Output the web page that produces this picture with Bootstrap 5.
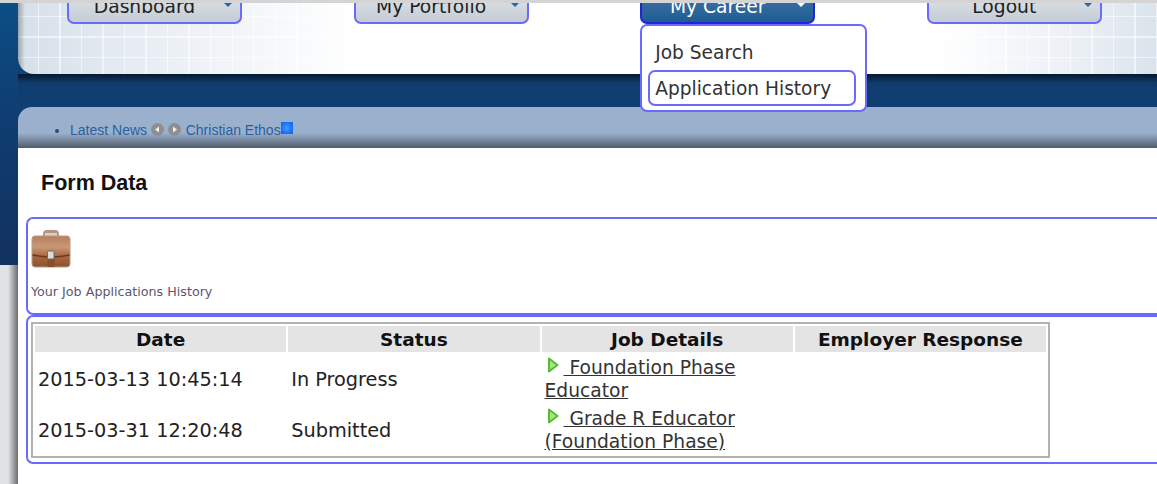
<!DOCTYPE html>
<html lang="en">
<head>
    <meta charset="UTF-8">
    <meta name="viewport" content="width=device-width, initial-scale=1.0">
    <title>Application History</title>
    <link href="https://cdn.jsdelivr.net/npm/bootstrap@5.3.3/dist/css/bootstrap.min.css" rel="stylesheet">
    <script src="https://cdn.jsdelivr.net/npm/bootstrap@5.3.3/dist/js/bootstrap.bundle.min.js"></script>
    <style>
        html, body { height: 100%; }
        body {
            margin: 0;
            overflow: hidden;
            font-family: "DejaVu Sans", sans-serif;
            background-color: #dfe3e6;
            background-image:
                linear-gradient(to right, rgba(70,70,70,0) 8px, #6b6b6b 18px),
                linear-gradient(to bottom, #0b4f86 0, #0f3f74 100px, #12315f 265px, #12315f 265px);
            background-size: 100% 219px, 100% 265px;
            background-position: 0 265px, 0 0;
            background-repeat: no-repeat;
        }
        .chrome-line { height: 3px; background: #d4d4d4; position: relative; z-index: 5; }
        .page-shell { padding-left: 18px; }
        .head-panel {
            height: 71px;
            padding-left: 49px;
            border-bottom-left-radius: 16px;
            background-color: #d6e0ea;
            background-image:
                linear-gradient(to right, rgba(90,90,90,.45) 0, rgba(255,255,255,0) 7px),
                linear-gradient(to right, rgba(255,255,255,0) 0, rgba(255,255,255,.6) 180px, #fff 340px, #fff 920px, rgba(255,255,255,.55) 1050px, rgba(255,255,255,.1) 1139px),
                repeating-linear-gradient(to right, transparent 0 20px, rgba(255,255,255,.55) 20px 21.5px),
                repeating-linear-gradient(to bottom, transparent 0 13px, rgba(255,255,255,.55) 13px 14.5px, transparent 14.5px 20.5px);
        }
        .menu-group { width: 175px; margin-right: 111.6px; margin-top: -15px; }
        .menu-btn {
            width: 175px;
            height: 36px;
            padding: 4px 7px 0 0;
            display: flex;
            align-items: center;
            font-size: 18.7px;
            color: #222;
            border: 2px solid #6a6aff;
            border-top: 0;
            border-radius: 0 0 7px 7px;
            background: linear-gradient(to bottom, #e4e8ec, #c4ccd4);
        }
        .menu-btn.is-open {
            color: #fff;
            border-color: #2323d8;
            background: linear-gradient(to bottom, #4478a8, #1f5c94);
        }
        .menu-btn span.label { flex-grow: 1; text-align: center; margin-right: 3px; }
        .caret-mark {
            width: 0; height: 0;
            margin-top: -6px;
            border-left: 5px solid transparent;
            border-right: 5px solid transparent;
            border-top: 5px solid #1f6aa8;
        }
        .is-open .caret-mark { border-top-color: #fff; }
        .career-menu.dropdown-menu {
            top: 36px;
            left: 0;
            width: 227px;
            height: 88px;
            padding: 8px 6px 0;
            margin: 0;
            min-width: 0;
            border: 2px solid #6a6aff;
            border-radius: 7px;
            background: #fff;
            z-index: 6;
        }
        .career-menu .dropdown-item {
            padding: 0 5px;
            font-size: 18.6px;
            color: #333;
            height: 36px;
            line-height: 34px;
            border: 2px solid transparent;
            border-radius: 7px;
            background: none;
        }
        .career-menu .dropdown-item.is-current { border-color: #6a6aff; width: 208px; }
        .head-gap {
            height: 33px;
            background: linear-gradient(to bottom, #06182e 0, #0f3c6e 9px, #0f3f72 100%);
        }
        .news-bar {
            height: 41px;
            padding-top: 15px;
            border-top-left-radius: 14px;
            background: linear-gradient(to bottom, #9bb0cd 0, #9bb0cd 26px, #4f5c6c 100%);
            font-family: "Liberation Sans", Arial, sans-serif;
            font-size: 14px;
            color: #29619f;
        }
        .news-list { margin: 0; padding: 0 0 0 52px; color: #1d4f8c; }
        .news-list li { line-height: 16px; }
        .news-list svg { vertical-align: -1px; }
        .ticker-text { color: #29619f; }
        .ticker-gap { margin-left: 1px; }
        .blue-dot {
            display: inline-block;
            width: 12px; height: 12px;
            vertical-align: 1px;
            background: radial-gradient(circle, #4d9bff 0, #0f6cff 70%);
        }
        .content-panel { background: #fff; height: 336px; padding-left: 8px; }
        .form-title {
            margin: 0;
            padding: 22px 0 0 15px;
            height: 69px;
            font-family: "Liberation Sans", Arial, sans-serif;
            font-size: 21.5px;
            font-weight: 700;
            line-height: 26px;
            color: #111;
        }
        .field-box {
            border: 2px solid #6a6aff;
            border-right: 0;
            border-radius: 7px 0 0 7px;
            background: #fff;
        }
        .intro-box { height: 98px; padding: 10px 0 0 3px; margin-bottom: -1px; }
        .intro-text { margin-top: 13px; font-size: 12.7px; color: #5c5670; }
        .list-box { height: 149px; padding: 5px 0 0 3px; margin-top: 1px; }
        .history-table {
            width: 1019px;
            margin: 0;
            border: 2px solid #b2b2b2;
            border-collapse: separate;
            border-spacing: 2px;
            table-layout: fixed;
            font-size: 19.3px;
        }
        .history-table > :not(caption) > * > * {
            padding: 1px 3px 0;
            border: 0;
            box-shadow: none;
            background: transparent;
            color: #222;
        }
        .history-table > thead > tr > th {
            height: 26px;
            padding: 0 3px 2px;
            text-align: center;
            background: #e4e4e4;
            color: #111;
            font-size: 18.5px;
            line-height: 20px;
        }
        .history-table td { height: 49px; vertical-align: middle; line-height: 23px; }
        .history-table a { color: #333; font-size: 18.7px; }
        .history-table a svg { vertical-align: 1px; margin: 0 5px 0 2px; }
    </style>
</head>
<body>
    <div class="chrome-line"></div>
    <div class="page-shell">
        <div class="head-panel d-flex">
            <div class="menu-group dropdown">
                <button class="btn menu-btn" type="button"><span class="label">Dashboard</span><span class="caret-mark"></span></button>
            </div>
            <div class="menu-group dropdown">
                <button class="btn menu-btn" type="button"><span class="label">My Portfolio</span><span class="caret-mark"></span></button>
            </div>
            <div class="menu-group dropdown">
                <button class="btn menu-btn is-open" type="button"><span class="label">My Career</span><span class="caret-mark"></span></button>
                <div class="dropdown-menu show career-menu">
                    <a class="dropdown-item" href="#">Job Search</a>
                    <a class="dropdown-item is-current" href="#">Application History</a>
                </div>
            </div>
            <div class="menu-group dropdown">
                <button class="btn menu-btn" type="button"><span class="label">Logout</span><span class="caret-mark"></span></button>
            </div>
        </div>
        <div class="head-gap"></div>
        <div class="news-bar">
            <ul class="news-list">
                <li><span class="ticker-text">Latest News</span>
                    <svg width="13" height="13" viewBox="0 0 13 13"><circle cx="6.5" cy="6.5" r="6.5" fill="#8f8f8f"/><path d="M8 3.5v6L4 6.500z" fill="#eee"/></svg>
                    <svg width="13" height="13" viewBox="0 0 13 13"><circle cx="6.500" cy="6.500" r="6.500" fill="#8f8f8f"/><path d="M5 3.500v6l4-3z" fill="#eee"/></svg>
                    <span class="ticker-text ticker-gap">Christian Ethos</span><span class="blue-dot"></span></li>
            </ul>
        </div>
        <div class="content-panel">
            <h1 class="form-title">Form Data</h1>
            <div class="field-box intro-box">
                <svg width="40" height="40" viewBox="0 0 40 40">
                    <defs>
                        <linearGradient id="caseFill" x1="0" y1="0" x2="0" y2="1">
                            <stop offset="0" stop-color="#b77e5c"/>
                            <stop offset=".35" stop-color="#c99878"/>
                            <stop offset=".65" stop-color="#a9683f"/>
                            <stop offset="1" stop-color="#8a5230"/>
                        </linearGradient>
                    </defs>
                    <path d="M12 8V5q0-4 4-4h8q4 0 4 4v3h-3V6q0-2-2-2h-6q-2 0-2 2v2z" fill="#b59580"/>
                    <rect x="14" y="4" width="12" height="3" fill="#d9d0c8"/>
                    <rect x="1" y="7" width="38" height="31" rx="3" fill="url(#caseFill)" stroke="#b89c88"/>
                    <path d="M1.500 26q18.500 4 37 0" fill="none" stroke="#6d3a1c" stroke-width="1.500"/>
                    <rect x="16.500" y="28" width="7" height="10" fill="#8b4e2a"/>
                    <rect x="16.500" y="22" width="6.500" height="8" rx="1" fill="#dcdcdc" stroke="#6c6c6c"/>
                </svg>
                <div class="intro-text">Your Job Applications History</div>
            </div>
            <div class="field-box list-box">
                <table class="table history-table">
                    <thead>
                        <tr><th>Date</th><th>Status</th><th>Job Details</th><th>Employer Response</th></tr>
                    </thead>
                    <tbody>
                        <tr>
                            <td>2015-03-13 10:45:14</td>
                            <td>In Progress</td>
                            <td><a href="#"><svg width="12" height="16" viewBox="0 0 12 16"><path d="M2 1.500 10.500 8 2 14.500z" fill="#a6e678" stroke="#56bb36" stroke-width="2" stroke-linejoin="round"/></svg> Foundation Phase Educator</a></td>
                            <td></td>
                        </tr>
                        <tr>
                            <td>2015-03-31 12:20:48</td>
                            <td>Submitted</td>
                            <td><a href="#"><svg width="12" height="16" viewBox="0 0 12 16"><path d="M2 1.500 10.500 8 2 14.500z" fill="#a6e678" stroke="#56bb36" stroke-width="2" stroke-linejoin="round"/></svg> Grade R Educator (Foundation Phase)</a></td>
                            <td></td>
                        </tr>
                    </tbody>
                </table>
            </div>
        </div>
    </div>
</body>
</html>
